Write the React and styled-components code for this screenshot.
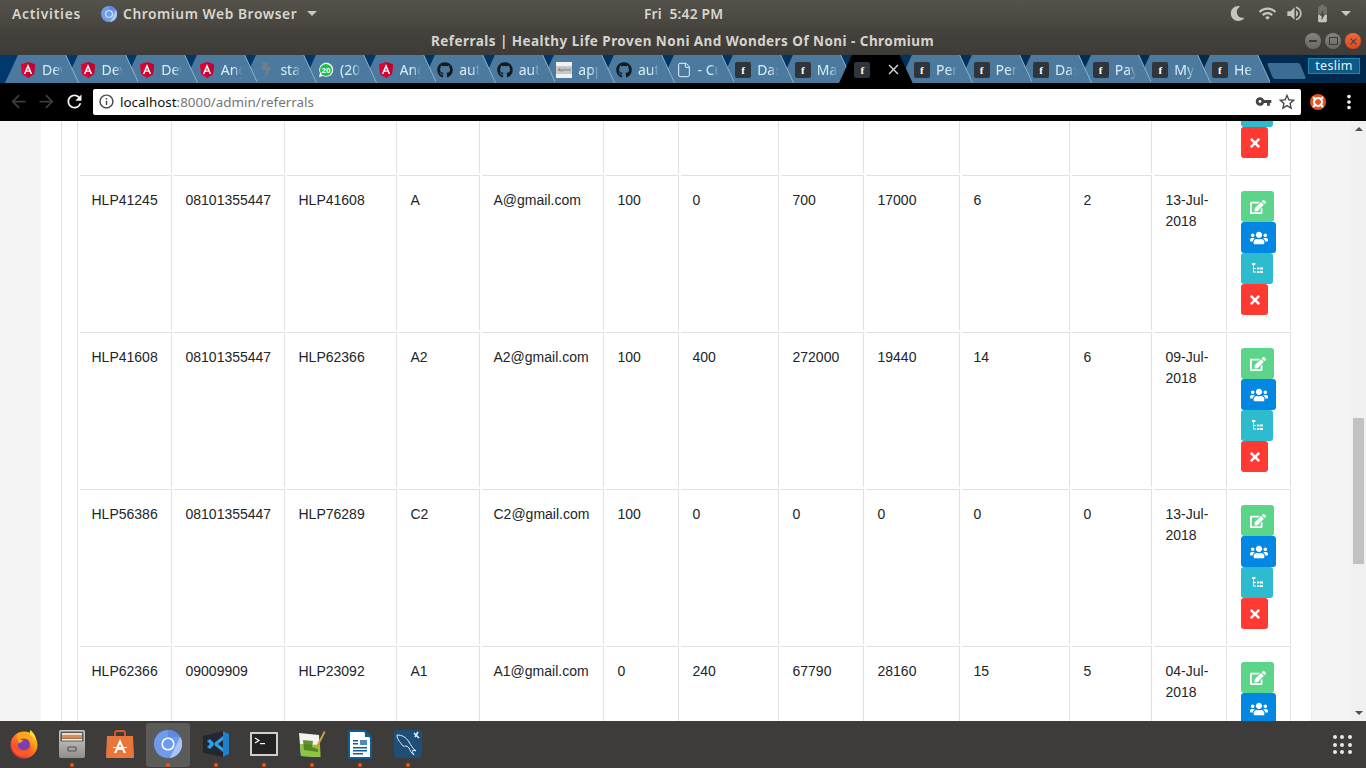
import React from "react";
import styled, { createGlobalStyle } from "styled-components";
import { FaEdit, FaUsers, FaTimes, FaGithub, FaBolt, FaMoon } from "react-icons/fa";
import { MdArrowBack, MdArrowForward, MdRefresh, MdInfoOutline, MdVpnKey, MdStarBorder, MdMoreVert, MdWifi, MdVolumeUp, MdBatteryCharging50, MdClose } from "react-icons/md";
import { File } from "lucide-react";

const Global = createGlobalStyle`
  html, body { margin: 0; padding: 0; height: 100%; overflow: hidden; }
  * { box-sizing: border-box; }
`;
const UI = `"Noto Sans", "Open Sans", sans-serif`;

const Screen = styled.div`
  width: 1366px; height: 768px; display: flex; flex-direction: column; overflow: hidden;
  font-family: "Liberation Sans", sans-serif; background: #000;
`;
const TopBar = styled.div`
  height: 27px; flex: none; display: flex; align-items: center; padding: 0 12px; position: relative;
  background: linear-gradient(#55524b, #48453f); color: #d8d6d0; font: 600 13.8px ${UI}; letter-spacing: .55px;
`;
const Activities = styled.span`letter-spacing: .75px;`;
const AppMenu = styled.div`display: flex; align-items: center; margin-left: 20px; gap: 6px;`;
const Caret = styled.span`
  width: 0; height: 0; border-left: 5px solid transparent; border-right: 5px solid transparent;
  border-top: 5px solid #c8c6c0; flex: none; margin-left: ${p => p.$m || 0}px;
`;
const Clock = styled.div`position: absolute; left: 644px; top: 4px; white-space: pre; letter-spacing: .2px;`;
const Tray = styled.div`
  margin-left: auto; display: flex; align-items: center; gap: 8px; color: #c6c4be; padding-right: 3px;
  svg { display: block; }
`;
const MoonWrap = styled.span`display: flex; margin-right: 5px;`;
const TitleBar = styled.div`
  height: 28px; flex: none; display: flex; align-items: center; justify-content: flex-end; position: relative; padding-right: 5px;
  background: linear-gradient(#46433e, #3e3c38); gap: 4px;
`;
const Title = styled.div`
  position: absolute; left: 431px; top: 5px; font: 700 13.5px ${UI}; color: #d5d3cd; white-space: nowrap; letter-spacing: .45px;
`;
const WinBtn = styled.div`
  width: 16px; height: 16px; border-radius: 50%; display: flex; align-items: center; justify-content: center;
  background: ${p => (p.$close ? "linear-gradient(#f0673a,#dc4a1c)" : "linear-gradient(#85837e,#6a6864)")};
  color: #3d3b38;
`;
const TabStrip = styled.div`
  height: 28px; flex: none; display: flex; align-items: stretch; padding-left: 5px;
  background: linear-gradient(90deg, #00386e 0%, #003464 60%, #00284c 100%);
`;
const TabShape = styled.svg`position: absolute; inset: 0; width: 100%; height: 100%;`;
const Tab = styled.div`
  position: relative; width: 73.6px; margin-right: -14px; flex: none; display: flex; align-items: center;
  padding: 1px 0 0 15px; gap: 6px; z-index: ${p => p.$z};
  font: 400 14px ${UI}; color: #d9eef8;
`;
const TabIcon = styled.span`
  width: 16px; height: 16px; flex: none; position: relative; display: flex; align-items: center; justify-content: center;
`;
const TabLabel = styled.span`
  position: relative; width: 21px; overflow: hidden; white-space: nowrap;
  -webkit-mask-image: linear-gradient(90deg, #000 60%, transparent);
  mask-image: linear-gradient(90deg, #000 60%, transparent);
`;
const FBox = styled.span`
  width: 16px; height: 16px; border-radius: 2px; background: #30353b; color: #fff; display: flex; align-items: center; justify-content: center;
  font: 700 11px "Liberation Serif", serif;
`;
const AppThumb = styled.span`
  width: 16px; height: 16px; background: linear-gradient(#f1f1f1 0 22%, #c7c7c7 22% 78%, #f1f1f1 78%); color: #555;
  font: 3px "Liberation Sans", sans-serif; display: flex; align-items: center; justify-content: center; overflow: hidden;
`;
const CloseGlyph = styled.span`
  position: relative; margin-left: 9px; display: flex; color: #d8d8d8; font-size: 17px;
`;
const NewTab = styled.div`
  width: 33px; height: 16px; margin: 8px 0 0 14px; flex: none;
  background: #3c6c92; transform: skewX(22deg); border-radius: 2px;
`;
const Profile = styled.div`
  margin: 3px 6px 0 auto; width: 52px; height: 16px; background: #0d5a85; border: 1px solid #2b7fa8; flex: none;
  color: #e6f2f8; font: 400 12.5px/14px ${UI}; text-align: center; letter-spacing: .3px;
`;
const Toolbar = styled.div`
  height: 38px; flex: none; background: #000; display: flex; align-items: center; padding: 0 8px 1px 4px;
`;
const NavBtn = styled.div`
  width: 28px; flex: none; display: flex; justify-content: center; color: ${p => (p.$dim ? "#3e3e3e" : "#f2f2f2")}; font-size: 21px;
`;
const Omnibox = styled.div`
  width: 1208px; flex: none; height: 26px; margin-left: 5px; background: #fff; border-radius: 2px; display: flex; align-items: center;
  padding: 0 2px 0 5px; font: 400 13.4px ${UI}; color: #757575;
`;
const Host = styled.span`color: #111;`;
const OmniIcon = styled.span`
  display: flex; color: ${p => p.$c || "#444"}; font-size: ${p => p.$s || 18}px; margin: ${p => p.$m || 0};
`;
const ToolRight = styled.div`display: flex; align-items: center; color: #f0f0f0; margin-left: 9px; flex: none;`;
const Spacer = styled.div`width: 12px;`;

const Page = styled.div`
  height: 600px; flex: none; display: flex; overflow: hidden; background: #f4f4f4;
`;
const Gutter = styled.div`width: 41px; flex: none;`;
const Card = styled.div`width: 1270px; flex: none; background: #fff; padding-left: 20px; overflow: hidden; height: 100%;`;
const Panel = styled.div`border-left: 1px solid #dfe1e6; padding-left: 15px; height: 100%; overflow: hidden;`;
const RightGutter = styled.div`width: 40px; flex: none; border-left: 1px solid #ececec;`;
const Table = styled.table`
  margin-top: -105px; table-layout: fixed; width: 1216px; border-collapse: separate; border-spacing: 2px;
  border-left: 1px solid #dfe1e6; font-size: 14px; line-height: 21px; color: #212529;
`;
const Col = styled.col`width: ${p => p.$w}px;`;
const Td = styled.td`
  height: 155px; vertical-align: top; padding: 14px 12px 0 11.5px; border-top: 1px solid #dfe1e6; border-right: 1px solid #dfe1e6;
  overflow-wrap: normal; word-break: normal;
`;
const Actions = styled.div`display: flex; flex-direction: column; align-items: flex-start; margin: 1px 0 0 .5px;`;
const ActionBtn = styled.div`
  width: ${p => p.$w}px; height: 31px; background: ${p => p.$bg}; border-radius: 3px; color: #fff;
  display: flex; align-items: center; justify-content: center; flex: none;
`;
const Scrollbar = styled.div`width: 15px; flex: none; background: #f0f0f0; display: flex; flex-direction: column; align-items: center;`;
const ArrowCell = styled.div`
  height: 16px; flex: none; display: flex; align-items: center; justify-content: center;
  margin-top: ${p => (p.$down ? "auto" : 0)};
`;
const Arrow = styled.span`
  width: 0; height: 0; border-left: 4px solid transparent; border-right: 4px solid transparent;
  ${p => (p.$down ? "border-top: 4px solid #505050;" : "border-bottom: 4px solid #505050;")}
`;
const Thumb = styled.div`width: 11px; height: 146px; margin-top: 281px; background: #c1c1c1; flex: none;`;

const Dock = styled.div`
  height: 47px; flex: none; background: #3d3c3a; display: flex; align-items: stretch; padding-right: 14px;
`;
const DockItem = styled.div`
  width: 44px; margin: 2px 2px 1px; border-radius: 3px; position: relative; display: flex; align-items: center; justify-content: center;
  padding-bottom: 2px; background: ${p => (p.$active ? "#5b5b59" : "transparent")};
`;
const Dot = styled.span`
  position: absolute; left: 50%; bottom: 0; width: 4px; height: 4px; margin-left: -2px; border-radius: 50%; background: #e9541f;
`;
const AppGrid = styled.div`
  margin: auto 0 auto auto; display: grid; grid-template-columns: repeat(3, 4px); gap: 3.7px;
`;
const GridDot = styled.span`width: 4px; height: 4px; border-radius: 50%; background: #e8e8e8;`;

const Angular = ({ s = 16 }) => (
  <svg width={s} height={s} viewBox="0 0 16 16">
    <path d="M8 0 1 2.5 2 12l6 4 6-4 1-9.5z" fill="#dd0031" />
    <path d="M8 0v16l6-4 1-9.5z" fill="#c3002f" />
    <path d="M8 2 3.8 12h1.6l.9-2.3h3.4l.9 2.3h1.6zM7 8.4 8 6l1 2.4z" fill="#fff" />
  </svg>
);
const WhatsApp = () => (
  <svg width="16" height="16" viewBox="0 0 16 16">
    <path d="M1 15l1-4A7 7 0 1 1 5 14z" fill="#fff" />
    <circle cx="8" cy="8" r="6" fill="#1fc04a" />
    <text x="8" y="10.8" textAnchor="middle" fontSize="8" fontWeight="700" fill="#fff" fontFamily="Liberation Sans">20</text>
  </svg>
);
const TreeIcon = () => (
  <svg width="11" height="11" viewBox="0 0 11 11" fill="#fff">
    <rect x="0" y="0" width="3.4" height="2" />
    <rect x="1" y="2" width="1" height="7" />
    <rect x="1" y="5" width="3" height="1" />
    <rect x="1" y="8.5" width="3" height="1" />
    <rect x="5" y="4.5" width="2.4" height="2" />
    <rect x="8" y="4.5" width="3" height="2" />
    <rect x="5" y="8" width="2.4" height="2" />
    <rect x="8" y="8" width="3" height="2" />
  </svg>
);
const ChromiumIcon = ({ s = 16 }) => (
  <svg width={s} height={s} viewBox="0 0 32 32">
    <circle cx="16" cy="16" r="16" fill="#6f9bec" />
    <path d="M16 0a16 16 0 0 1 14 8H16z" fill="#5c8ae4" />
    <path d="M30 8a16 16 0 0 1-12 24l6-12z" fill="#a9c4f5" />
    <circle cx="16" cy="16" r="7.5" fill="#fff" />
    <circle cx="16" cy="16" r="5.8" fill="#6f9bec" />
  </svg>
);

const FirefoxIcon = () => (
  <svg width="30" height="30" viewBox="0 0 30 30">
    <defs>
      <linearGradient id="ff" x1="0.9" y1="0.1" x2="0.2" y2="1">
        <stop offset="0" stopColor="#ffd21f" /><stop offset=".45" stopColor="#ff7a1c" /><stop offset="1" stopColor="#e5204f" />
      </linearGradient>
    </defs>
    <circle cx="15" cy="16" r="13.5" fill="url(#ff)" />
    <path d="M9 11c3-2 8-2 11 1 2 3 1 8-3 9-4 1-7-1-8-4z" fill="#7a3fb0" />
    <path d="M8 5c4-3 10-2 13 1 3 3 4 7 4 10-2-4-5-7-9-7-2 0-4 1-5 2h3c0 2-3 2-4 4-1-3-2-7-2-10z" fill="#ffa51c" />
    <path d="M4 13c0 6 5 10 11 9 4-1 6-3 7-6 1 5-3 11-9 11-7 0-11-7-9-14z" fill="#ff5a22" />
    <path d="M21 1c3 2 6 6 6 10-2-3-4-4-6-5z" fill="#ffdc3a" />
  </svg>
);
const FilesIcon = () => (
  <svg width="26" height="28" viewBox="0 0 26 28">
    <defs>
      <linearGradient id="fc" x1="0" y1="0" x2="0" y2="1">
        <stop offset="0" stopColor="#cfcfcc" /><stop offset="1" stopColor="#8e8e8a" />
      </linearGradient>
    </defs>
    <rect x="0" y="0" width="26" height="28" rx="2" fill="url(#fc)" />
    <rect x="1.5" y="1.5" width="23" height="10" fill="#5d5c58" />
    <rect x="3" y="3" width="20" height="2.5" fill="#f3d9c0" />
    <rect x="3" y="6" width="20" height="2.5" fill="#e58a4e" />
    <rect x="3" y="9" width="20" height="1.5" fill="#f6f0e8" />
    <rect x="9" y="17" width="8" height="4" rx="1" fill="none" stroke="#555" strokeWidth="1.2" />
  </svg>
);
const StoreIcon = () => (
  <svg width="28" height="28" viewBox="0 0 28 28">
    <path d="M9 6V3a2 2 0 0 1 2-2h6a2 2 0 0 1 2 2v3" fill="none" stroke="#d65f2c" strokeWidth="1.8" />
    <path d="M1 6h26l1 21a1 1 0 0 1-1 1H1a1 1 0 0 1-1-1z" fill="#e8753a" />
    <path d="M14 9l-6 14h2.4l1.2-3h4.8l1.2 3H20zM12.6 17.4 14 14l1.4 3.4z" fill="#fff" />
    <rect x="7" y="17" width="14" height="1" fill="#fff" />
  </svg>
);
const VSCodeIcon = () => (
  <svg width="28" height="28" viewBox="0 0 28 28">
    <path d="M1 6 21 1l6 3v20l-6 3-20-4z" fill="#23272e" />
    <path d="M21 1l6 3v20l-6 3z" fill="#1f7fc9" />
    <path d="M21 6 11 14l10 8V18l-5-4 5-4zM5 11l3-2 5 5-5 5-3-2 3-3z" fill="#2f9fe8" />
  </svg>
);
const TerminalIcon = () => (
  <svg width="28" height="24" viewBox="0 0 28 24">
    <rect width="28" height="24" rx="1" fill="#cfcfcb" />
    <rect x="2" y="2" width="24" height="20" fill="#232323" />
    <path d="M5 6l4 2.5L5 11" fill="none" stroke="#fff" strokeWidth="1.2" />
    <rect x="10" y="11" width="5" height="1.2" fill="#fff" />
  </svg>
);
const EditorIcon = () => (
  <svg width="28" height="28" viewBox="0 0 28 28">
    <path d="M1 3 21 5l1 22L3 26z" fill="#f3f3ee" />
    <path d="M2 14l20 1 .6 12L3 26z" fill="#8cc63f" />
    <path d="M5 10l10 1-1 6 6 2v3L6 20z" fill="#4f7a1c" opacity=".85" />
    <path d="M18 16 26 1l1.5 1-7.5 15-2 2z" fill="#c9a33a" />
  </svg>
);
const WriterIcon = () => (
  <svg width="24" height="29" viewBox="0 0 24 29">
    <path d="M0 1a1 1 0 0 1 1-1h16l7 7v21a1 1 0 0 1-1 1H1a1 1 0 0 1-1-1z" fill="#0f5d95" />
    <path d="M2 2h14l6 6v19H2z" fill="#fff" />
    <path d="M17 0l7 7h-7z" fill="#0f5d95" />
    <rect x="5" y="10" width="5" height="1.5" fill="#0f5d95" /><rect x="5" y="13" width="5" height="1.5" fill="#0f5d95" />
    <rect x="12" y="10" width="7" height="5" fill="#4d8cbc" />
    <rect x="5" y="17" width="14" height="1.5" fill="#0f5d95" /><rect x="5" y="20" width="14" height="1.5" fill="#0f5d95" /><rect x="5" y="23" width="10" height="1.5" fill="#0f5d95" />
  </svg>
);
const MysqlIcon = () => (
  <svg width="28" height="28" viewBox="0 0 28 28">
    <rect width="28" height="28" rx="3" fill="#1f4f76" />
    <path d="M3 5c5 0 9 2 12 7 2 3 3 6 7 9l-3-1c-1 2 0 3 1 5-3-2-4-5-5-7-3-4-5 0-7-3-1-2-2-3-3-4-1-2-2-3-2-6z" fill="none" stroke="#e8eef3" strokeWidth="1" />
    <path d="M20 3l5 5M24 2l-3 5" stroke="#e8eef3" strokeWidth="1.6" />
  </svg>
);

const tabs = [
  { i: "a", t: "Dev" }, { i: "a", t: "Dev" }, { i: "a", t: "Dev" }, { i: "a", t: "Ang" }, { i: "b", t: "sta" },
  { i: "w", t: "(20" }, { i: "a", t: "Ang" }, { i: "g", t: "aut" }, { i: "g", t: "aut" }, { i: "p", t: "app" },
  { i: "g", t: "aut" }, { i: "d", t: "- Cu" }, { i: "f", t: "Das" }, { i: "f", t: "Ma" }, { i: "f", t: "", active: true },
  { i: "f", t: "Per" }, { i: "f", t: "Per" }, { i: "f", t: "Das" }, { i: "f", t: "Pay" }, { i: "f", t: "My" }, { i: "f", t: "He" },
];
const tabIcon = i => {
  if (i === "a") return <Angular />;
  if (i === "b") return <FaBolt size={15} color="#6e7f8c" />;
  if (i === "w") return <WhatsApp />;
  if (i === "g") return <FaGithub size={16} color="#16191c" />;
  if (i === "p") return <AppThumb>AppDivid</AppThumb>;
  if (i === "d") return <File size={16} color="#e8f3f9" strokeWidth={1.5} />;
  return <FBox>f</FBox>;
};

const cols = [92, 111, 110, 81, 122, 73, 98, 83, 94, 108, 80, 73, 62];
const rows = [
  ["", "", "", "", "", "", "", "", "", "", "", ""],
  ["HLP41245", "08101355447", "HLP41608", "A", "A@gmail.com", "100", "0", "700", "17000", "6", "2", "13-Jul-2018"],
  ["HLP41608", "08101355447", "HLP62366", "A2", "A2@gmail.com", "100", "400", "272000", "19440", "14", "6", "09-Jul-2018"],
  ["HLP56386", "08101355447", "HLP76289", "C2", "C2@gmail.com", "100", "0", "0", "0", "0", "0", "13-Jul-2018"],
  ["HLP62366", "09009909", "HLP23092", "A1", "A1@gmail.com", "0", "240", "67790", "28160", "15", "5", "04-Jul-2018"],
];
const dock = [
  { c: <FirefoxIcon /> }, { c: <FilesIcon />, d: 1 }, { c: <StoreIcon /> }, { c: <ChromiumIcon s={28} />, d: 1, a: 1 },
  { c: <VSCodeIcon />, d: 1 }, { c: <TerminalIcon />, d: 1 }, { c: <EditorIcon />, d: 1 }, { c: <WriterIcon />, d: 1 }, { c: <MysqlIcon />, d: 1 },
];

export default function App() {
  return (
    <Screen>
      <Global />
      <TopBar>
        <Activities>Activities</Activities>
        <AppMenu><ChromiumIcon /><span>Chromium Web Browser</span><Caret $m={4} /></AppMenu>
        <Clock>Fri  5:42 PM</Clock>
        <Tray>
          <MoonWrap><FaMoon size={15} /></MoonWrap>
          <MdWifi size={19} /><MdVolumeUp size={19} /><MdBatteryCharging50 size={21} /><Caret />
        </Tray>
      </TopBar>
      <TitleBar>
        <Title>Referrals | Healthy Life Proven Noni And Wonders Of Noni - Chromium</Title>
        <WinBtn><svg width="8" height="2"><rect width="8" height="2" fill="#3d3b38" /></svg></WinBtn>
        <WinBtn><svg width="9" height="8"><rect x=".5" y=".5" width="8" height="7" fill="none" stroke="#3d3b38" /></svg></WinBtn>
        <WinBtn $close><MdClose size={11} /></WinBtn>
      </TitleBar>
      <TabStrip>
        {tabs.map((t, n) => (
          <Tab key={n} $z={t.active ? 40 : 30 - n}>
            <TabShape viewBox="0 0 74 28" preserveAspectRatio="none">
              <path d="M0 28 13 0H61L74 28Z" fill={t.active ? "#000" : "#4b7a9e"} />
              {!t.active && <path d="M61 0 74 28" stroke="#8fb2cb" strokeWidth="1" />}
            </TabShape>
            <TabIcon>{tabIcon(t.i)}</TabIcon>
            {t.active ? <CloseGlyph><MdClose /></CloseGlyph> : <TabLabel>{t.t}</TabLabel>}
          </Tab>
        ))}
        <NewTab />
        <Profile>teslim</Profile>
      </TabStrip>
      <Toolbar>
        <NavBtn $dim><MdArrowBack /></NavBtn>
        <NavBtn $dim><MdArrowForward /></NavBtn>
        <NavBtn><MdRefresh /></NavBtn>
        <Omnibox>
          <OmniIcon $m="0 5px 0 0" $s={17}><MdInfoOutline /></OmniIcon>
          <Host>localhost</Host>:8000/admin/referrals
          <OmniIcon $m="0 0 0 auto" $s={17}><MdVpnKey /></OmniIcon>
          <OmniIcon $m="0 2px 0 5px" $s={20}><MdStarBorder /></OmniIcon>
        </Omnibox>
        <ToolRight>
          <svg width="16" height="16" viewBox="0 0 16 16">
            <circle cx="8" cy="8" r="8" fill="#e95420" />
            <circle cx="8" cy="8" r="4" fill="none" stroke="#fff" strokeWidth="2" />
            <path d="M3 3l3 3M13 3l-3 3M3 13l3-3M13 13l-3-3" stroke="#fff" strokeWidth="2" />
          </svg>
          <Spacer />
          <MdMoreVert size={22} />
        </ToolRight>
      </Toolbar>
      <Page>
        <Gutter />
        <Card>
          <Panel>
            <Table>
              <colgroup>{cols.map((w, i) => <Col key={i} $w={w} />)}</colgroup>
              <tbody>
                {rows.map((r, n) => (
                  <tr key={n}>
                    {r.map((c, i) => <Td key={i}>{c}</Td>)}
                    <Td>
                      <Actions>
                        <ActionBtn $w={33} $bg="#5cd58b"><FaEdit size={16} /></ActionBtn>
                        <ActionBtn $w={35} $bg="#0288e2"><FaUsers size={18} /></ActionBtn>
                        <ActionBtn $w={32} $bg="#2cbbcf"><TreeIcon /></ActionBtn>
                        <ActionBtn $w={27} $bg="#ff3a33"><FaTimes size={14} /></ActionBtn>
                      </Actions>
                    </Td>
                  </tr>
                ))}
              </tbody>
            </Table>
          </Panel>
        </Card>
        <RightGutter />
        <Scrollbar>
          <ArrowCell><Arrow /></ArrowCell>
          <Thumb />
          <ArrowCell $down><Arrow $down /></ArrowCell>
        </Scrollbar>
      </Page>
      <Dock>
        {dock.map((d, i) => (
          <DockItem key={i} $active={d.a}>{d.c}{d.d && <Dot />}</DockItem>
        ))}
        <AppGrid>{Array.from({ length: 9 }, (_, i) => <GridDot key={i} />)}</AppGrid>
      </Dock>
    </Screen>
  );
}
